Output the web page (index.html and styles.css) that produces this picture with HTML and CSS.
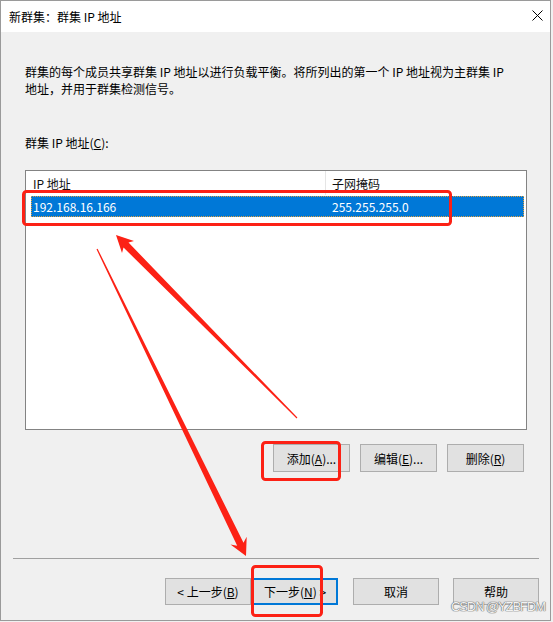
FILE: index.html
```html
<!DOCTYPE html>
<html lang="zh-CN">
<head>
<meta charset="utf-8">
<title>新群集：群集 IP 地址</title>
<link rel="stylesheet" href="styles.css">
</head>
<body>
<div class="window">
  <div class="titlebar">
    <span class="title">新群集：群集 IP 地址</span>
    <svg class="close" width="11" height="11" viewBox="0 0 11 11"><path d="M0.5 0.5 L10.5 10.5 M10.5 0.5 L0.5 10.5" stroke="#000" stroke-width="1" fill="none"/></svg>
  </div>
  <div class="content">
    <p class="desc">群集的每个成员共享群集 IP 地址以进行负载平衡。将所列出的第一个 IP 地址视为主群集 IP<br>地址，并用于群集检测信号。</p>
    <div class="label">群集 IP 地址(<u>C</u>):</div>
    <div class="listbox">
      <div class="list-head">
        <div class="hcell hcell-ip">IP 地址</div>
        <div class="hcell hcell-mask">子网掩码</div>
      </div>
      <div class="list-row selected">
        <div class="cell cell-ip">192.168.16.166</div>
        <div class="cell cell-mask">255.255.255.0</div>
      </div>
    </div>
    <div class="list-buttons">
      <button class="btn btn-small">添加(<u>A</u>)...</button>
      <button class="btn btn-small">编辑(<u>E</u>)...</button>
      <button class="btn btn-small">删除(<u>R</u>)</button>
    </div>
  </div>
  <div class="separator"></div>
  <div class="footer">
    <button class="btn btn-wide">&lt; 上一步(<u>B</u>)</button>
    <button class="btn btn-wide btn-default">下一步(<u>N</u>) &gt;</button>
    <button class="btn btn-wide btn-cancel">取消</button>
    <button class="btn btn-wide btn-help">帮助</button>
  </div>
  <div class="watermark">CSDN @YZBFDM</div>
</div>
<svg class="annotations" width="553" height="622" viewBox="0 0 553 622">
  <g fill="none" stroke="#fc2115" stroke-width="3">
    <rect x="23.5" y="191.5" width="427" height="33" rx="3"/>
    <rect x="262.5" y="442.5" width="77" height="37" rx="3"/>
    <rect x="252.5" y="566.5" width="69" height="49" rx="3"/>
  </g>
  <g fill="#fc2115">
    <polygon points="116,235 134,241 128.5,242.5 297.4,417.6 296.6,418.4 123.5,247.5 122,253"/>
    <polygon points="246,556 230.5,544.6 237.2,545.8 96.5,249.3 97.6,248.7 243.5,542.8 246.7,536.8"/>
  </g>
</svg>
</body>
</html>
```
FILE: styles.css
```css
html, body {
  margin: 0;
  padding: 0;
}
body {
  width: 553px;
  height: 622px;
  background: #f0f0f0;
  font-family: "Noto Sans CJK SC", "Noto Sans", sans-serif;
  font-size: 12px;
  color: #000;
  position: relative;
  overflow: hidden;
}
.window {
  position: relative;
  box-sizing: border-box;
  width: 551px;
  height: 621px;
  border: 1px solid #9a9a9a;
  background: #f0f0f0;
  display: flex;
  flex-direction: column;
}
.titlebar {
  height: 31px;
  flex: none;
  background: #fff;
  display: flex;
  align-items: center;
  justify-content: space-between;
  padding: 0 7px 0 8px;
  line-height: 17px;
}
.title {
  margin-top: -1px;
}
.close {
  display: block;
  margin-top: -2px;
}
.content {
  padding: 0 23px 0 24px;
  display: flex;
  flex-direction: column;
}
.desc {
  margin: 31px 0 0 0;
  line-height: 17px;
}
.label {
  margin-top: 37px;
  line-height: 17px;
}
.listbox {
  margin-top: 19px;
  box-sizing: border-box;
  height: 260px;
  background: #fff;
  border: 1px solid #838383;
}
.list-head {
  display: flex;
  height: 25px;
  line-height: 25px;
  color: #111;
}
.hcell-ip {
  width: 292px;
  padding-left: 7px;
  border-right: 1px solid #e5e5e5;
  margin: 0 0 1px 0;
}
.hcell-mask {
  padding-left: 6px;
}
.list-row {
  display: flex;
  height: 21px;
  line-height: 21px;
  margin: 0 2px 0 5px;
}
.list-row.selected {
  background: #0078d7;
  color: #fff;
  outline: 1px dotted #e0a040;
  outline-offset: -1px;
}
.cell-ip {
  width: 292px;
  padding-left: 2px;
}
.cell-mask {
  padding-left: 7px;
}
.list-buttons {
  display: flex;
  justify-content: flex-end;
  gap: 10px;
  margin-top: 14px;
  padding-right: 3px;
}
.btn {
  box-sizing: border-box;
  background: #e1e1e1;
  border: 1px solid #adadad;
  border-radius: 0;
  font-family: "Noto Sans CJK SC", "Noto Sans", sans-serif;
  font-size: 12px;
  color: #000;
  padding: 0;
  margin: 0;
  line-height: 17px;
}
.btn u {
  text-underline-offset: 1px;
}
.btn-small {
  width: 77px;
  height: 28px;
}
.separator {
  height: 1px;
  background: #a0a0a0;
  margin: 86px 11px 0 12px;
}
.footer {
  display: flex;
  margin-top: 19px;
  padding-left: 164px;
}
.btn-wide {
  width: 86px;
  height: 27px;
}
.btn-default {
  margin-left: 1px;
  border: 2px solid #0078d7;
}
.btn-cancel {
  margin-left: 15px;
}
.btn-help {
  margin-left: 14px;
}
.watermark {
  position: absolute;
  left: 450px;
  top: 600px;
  font-family: "Liberation Sans", sans-serif;
  font-size: 13px;
  line-height: 11px;
  letter-spacing: -1.1px;
  color: #f2f2f2;
  text-shadow: 0 0 1px #6a6a6a, 0 0 1px #6a6a6a, 0 0 1px #6a6a6a;
}
.annotations {
  position: absolute;
  left: 0;
  top: 0;
  pointer-events: none;
}
```
